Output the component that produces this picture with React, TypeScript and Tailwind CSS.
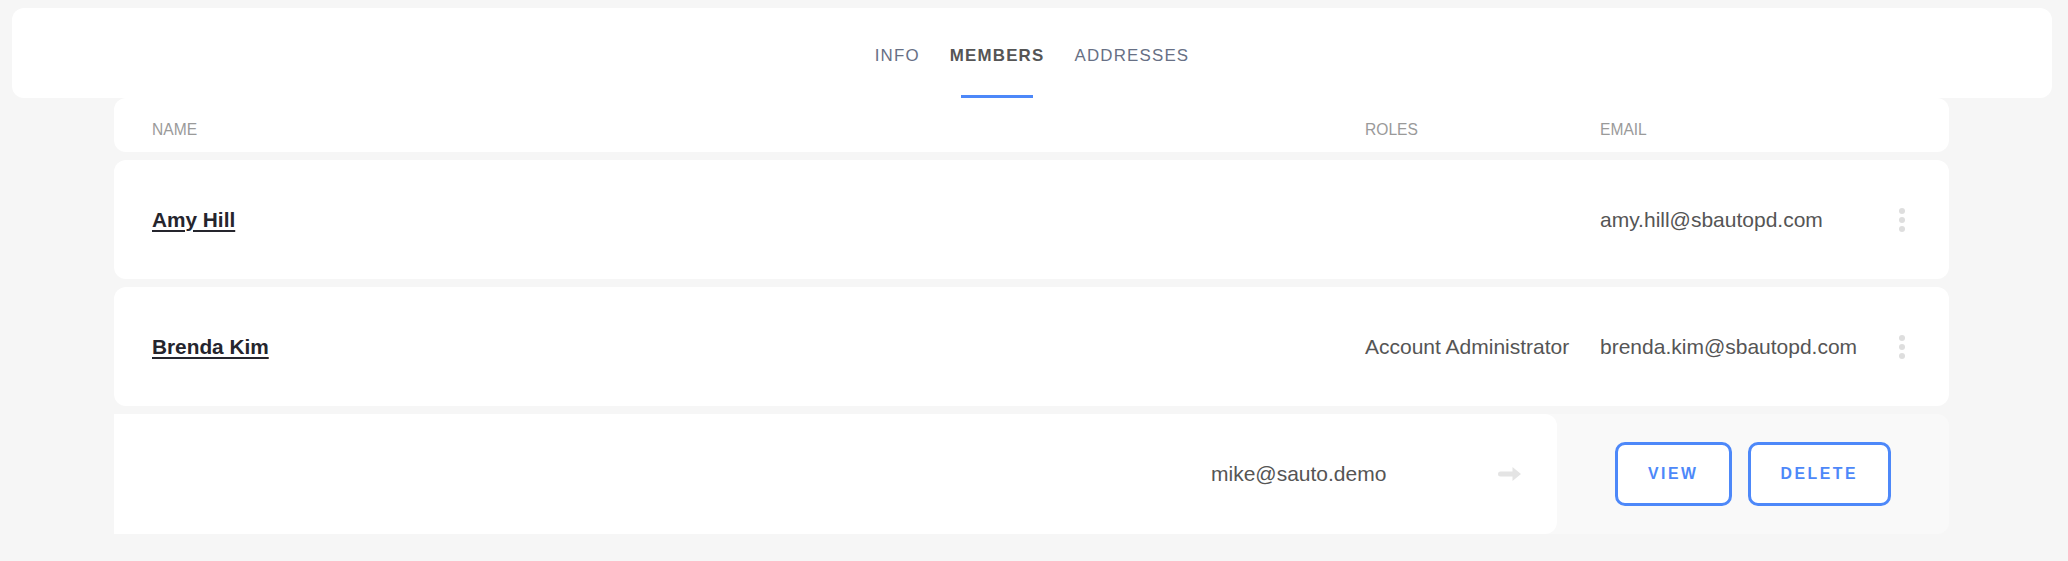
import { ReactNode } from 'react';

const font = { fontFamily: '"Liberation Sans", Arial, sans-serif' };

function Tab({ label, active }: { label: string; active?: boolean }) {
  return (
    <div className="relative flex items-center pt-[6px]">
      <span
        className={
          active
            ? 'text-[16.9px] font-bold tracking-[0.07em] text-[#555555]'
            : 'text-[16.9px] tracking-[0.07em] text-[#677085]'
        }
      >
        {label}
      </span>
      {active && <div className="absolute left-[11px] right-[11px] bottom-0 h-[3px] bg-[#4d88f9]" />}
    </div>
  );
}

function Dots() {
  return (
    <div className="flex flex-col items-center gap-[3px]">
      <span className="w-[6px] h-[6px] rounded-full bg-[#dedede]" />
      <span className="w-[6px] h-[6px] rounded-full bg-[#dedede]" />
      <span className="w-[6px] h-[6px] rounded-full bg-[#dedede]" />
    </div>
  );
}

function Row({ name, role, email }: { name: string; role?: string; email: string }) {
  return (
    <div className="h-[119px] bg-white rounded-[12px] flex items-center pl-[38px] pr-[35px]">
      <div className="flex-1">
        <a href="#" className="text-[20.8px] font-bold underline underline-offset-[3px] text-[#25252d]">
          {name}
        </a>
      </div>
      <div className="w-[235px] text-[21px] text-[#555555]">{role}</div>
      <div className="w-[290px] text-[21px] text-[#555555]">{email}</div>
      <div className="w-[24px] flex justify-center">
        <Dots />
      </div>
    </div>
  );
}

function OutlineButton({ children }: { children: ReactNode }) {
  return (
    <button className="h-[64px] px-[30px] bg-white border-[3px] border-[#4d88f9] rounded-[10px] text-[15.8px] font-bold tracking-[0.16em] text-[#4d88f9]">
      {children}
    </button>
  );
}

export default function App() {
  return (
    <div className="min-h-screen bg-[#f6f6f6] pt-2" style={font}>
      {/* Tabs */}
      <div className="ml-[12px] w-[2040px] h-[90px] bg-white rounded-[12px] flex justify-center gap-[30px]">
        <Tab label="INFO" />
        <Tab label="MEMBERS" active />
        <Tab label="ADDRESSES" />
      </div>

      <div className="ml-[114px] w-[1835px] flex flex-col gap-2">
        {/* Column titles */}
        <div className="h-[54px] bg-white rounded-[12px] flex items-center pt-[10px] pl-[38px] pr-[35px] text-[15.6px] text-[#9a9a9a]">
          <div className="flex-1">NAME</div>
          <div className="w-[235px]">ROLES</div>
          <div className="w-[290px]">EMAIL</div>
          <div className="w-[24px]" />
        </div>

        <Row name="Amy Hill" email="amy.hill@sbautopd.com" />
        <Row name="Brenda Kim" role="Account Administrator" email="brenda.kim@sbautopd.com" />

        {/* Swiped row with actions */}
        <div className="h-[120px] flex rounded-r-[12px] bg-[#f9f9f9]">
          <div className="w-[1443px] bg-white rounded-r-[12px] flex items-center pr-[35px]">
            <div className="flex-1" />
            <div className="w-[287px] text-[21px] text-[#555555]">mike@sauto.demo</div>
            <div className="w-[24px] flex justify-center">
              <svg width="24" height="16" viewBox="0 0 24 16">
                <path d="M2.5 5.5h12V1L23 8l-8.5 7v-4.5h-12a2.5 2.5 0 0 1 0-5z" fill="#e4e4e4" />
              </svg>
            </div>
          </div>
          <div className="flex-1 flex items-center justify-center gap-4">
            <OutlineButton>VIEW</OutlineButton>
            <OutlineButton>DELETE</OutlineButton>
          </div>
        </div>
      </div>
    </div>
  );
}
